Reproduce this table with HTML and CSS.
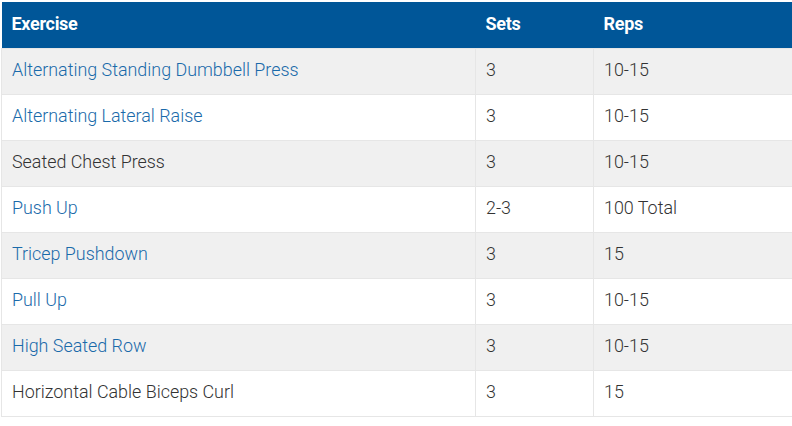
FILE: index.html
```html
<!DOCTYPE html>
<html>
<head>
<meta charset="utf-8">
<link rel="stylesheet" href="styles.css">
</head>
<body>
<table class="workout">
  <colgroup>
    <col class="c-ex"><col class="c-sets"><col class="c-reps">
  </colgroup>
  <thead>
    <tr><th>Exercise</th><th>Sets</th><th>Reps</th></tr>
  </thead>
  <tbody>
    <tr><td><a href="#">Alternating Standing Dumbbell Press</a></td><td>3</td><td>10-15</td></tr>
    <tr><td><a href="#">Alternating Lateral Raise</a></td><td>3</td><td>10-15</td></tr>
    <tr><td>Seated Chest Press</td><td>3</td><td>10-15</td></tr>
    <tr><td><a href="#">Push Up</a></td><td>2-3</td><td>100 Total</td></tr>
    <tr><td><a href="#">Tricep Pushdown</a></td><td>3</td><td>15</td></tr>
    <tr><td><a href="#">Pull Up</a></td><td>3</td><td>10-15</td></tr>
    <tr><td><a href="#">High Seated Row</a></td><td>3</td><td>10-15</td></tr>
    <tr><td>Horizontal Cable Biceps Curl</td><td>3</td><td>15</td></tr>
  </tbody>
</table>
</body>
</html>
```
FILE: styles.css
```css
html, body {
  margin: 0;
  padding: 0;
  background: #ffffff;
}
body {
  padding: 2px 0 0 1px;
  font-family: Roboto, "Liberation Sans", sans-serif;
  font-size: 17.9px;
  font-weight: 300;
  color: #333333;
}
.workout {
  border-collapse: collapse;
  width: 791px;
  table-layout: fixed;
}
.c-ex { width: 474px; }
.c-sets { width: 118px; }
.c-reps { width: 199px; }
.workout th {
  background: #005698;
  color: #ffffff;
  font-weight: 700;
  font-size: 18px;
  text-align: left;
  height: 46px;
  padding: 0 10px 2px;
  box-sizing: border-box;
  vertical-align: middle;
  border: none;
  letter-spacing: -0.3px;
}
.workout td {
  height: 46px;
  padding: 0 10px 4px;
  box-sizing: border-box;
  vertical-align: middle;
  border: 1px solid #e6e6e6;
}
.workout tbody tr:nth-child(odd) td {
  background: #f0f0f0;
}
.workout tbody tr:nth-child(even) td {
  background: #ffffff;
}
.workout a {
  color: #1a6aaa;
  text-decoration: none;
}
```
